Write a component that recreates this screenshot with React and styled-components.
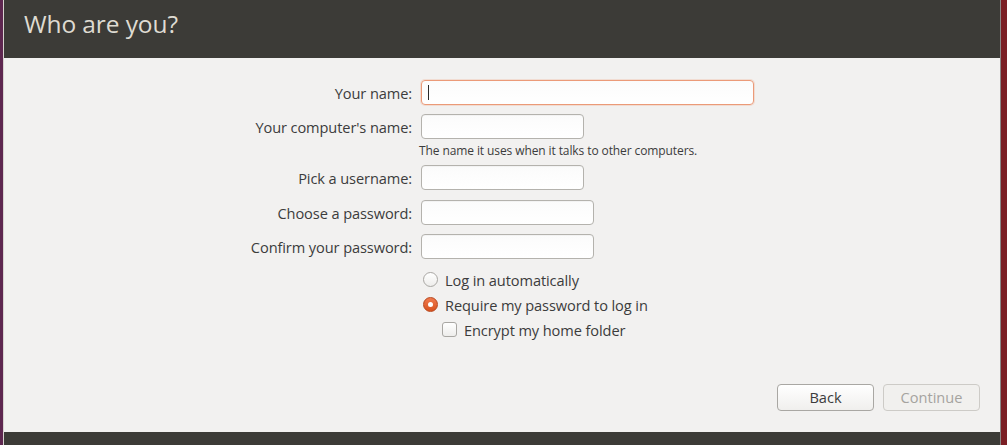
import React from "react";
import styled, { createGlobalStyle } from "styled-components";

const GlobalStyle = createGlobalStyle`
  html, body {
    margin: 0;
    padding: 0;
    width: 1007px;
    height: 445px;
    overflow: hidden;
    background: #5e2750;
  }
  * { box-sizing: border-box; }
`;

//Screen
const Screen = styled.div`
  display: flex;
  width: 1007px;
  height: 445px;
  font-family: "Open Sans", "Noto Sans", sans-serif;
`;

//Desktop edges
const Edge = styled.div`
  width: ${(p) => p.w}px;
  background: ${(p) => p.bg};
  border-${(p) => p.side}: 1px solid ${(p) => p.line};
`;

//Window
const Window = styled.div`
  flex: 1;
  display: flex;
  flex-direction: column;
  background: #f2f1f0;
`;

const Header = styled.div`
  height: 58px;
  background: #3c3b37;
  display: flex;
  align-items: center;
  padding-left: 20px;
  padding-bottom: 11px;
`;

const Title = styled.h1`
  margin: 0;
  font-weight: 400;
  font-size: 24.5px;
  color: #dfdbd2;
  letter-spacing: -0.1px;
`;

const Content = styled.div`
  flex: 1;
  display: flex;
  flex-direction: column;
  padding: 22px 20px 21px 0;
`;

const Form = styled.div`
  display: grid;
  grid-template-columns: 408px 1fr;
  column-gap: 9px;
  align-items: center;
`;

const Label = styled.label`
  justify-self: end;
  font-size: 14.6px;
  color: #3c3c3c;
  margin-top: ${(p) => p.mt || 0}px;
  letter-spacing: -0.1px;
`;

const Input = styled.div`
  height: 25px;
  width: ${(p) => p.w}px;
  margin-top: ${(p) => p.mt || 0}px;
  border-radius: 4px;
  border: 1px solid ${(p) => (p.focused ? "#eb9a78" : "#b4b2ad")};
  background: linear-gradient(#fbfbfb, #ffffff);
  box-shadow: ${(p) =>
    p.focused ? "0 0 0 1px rgba(240,160,120,0.25)" : "inset 0 1px 0 rgba(0,0,0,0.03)"};
  display: flex;
  align-items: center;
  padding-left: 6px;
`;

const Caret = styled.span`
  width: 1px;
  height: 15px;
  background: #2a2a2a;
`;

const Hint = styled.div`
  grid-column: 2;
  font-size: 12px;
  line-height: 16px;
  color: #3c3c3c;
  margin-top: 4px;
  margin-left: -2px;
  letter-spacing: -0.1px;
`;

const Options = styled.div`
  grid-column: 2;
  display: flex;
  flex-direction: column;
  margin-top: 8px;
`;

const Option = styled.div`
  display: flex;
  align-items: center;
  height: 25px;
  gap: 7px;
  padding-left: ${(p) => p.indent || 2}px;
  font-size: 14.6px;
  color: #3c3c3c;
  letter-spacing: -0.1px;
`;

const Radio = styled.span`
  width: 15px;
  height: 15px;
  border-radius: 50%;
  display: flex;
  align-items: center;
  justify-content: center;
  border: 1px solid ${(p) => (p.checked ? "#b8461c" : "#a9a7a3")};
  background: ${(p) =>
    p.checked
      ? "linear-gradient(#f07a4e, #d8531f)"
      : "linear-gradient(#ffffff, #eeedeb)"};
  &::after {
    content: "";
    display: ${(p) => (p.checked ? "block" : "none")};
    width: 5px;
    height: 5px;
    border-radius: 50%;
    background: #fff;
  }
`;

const Check = styled.span`
  width: 15px;
  height: 15px;
  border-radius: 3px;
  border: 1px solid #a9a7a3;
  background: linear-gradient(#ffffff, #eeedeb);
`;

const Actions = styled.div`
  margin-top: auto;
  display: flex;
  justify-content: flex-end;
  gap: 9px;
`;

const Button = styled.button`
  width: 97px;
  height: 27px;
  border-radius: 4px;
  font-family: inherit;
  font-size: 14.6px;
  border: 1px solid ${(p) => (p.disabled ? "#cdcbc7" : "#a9a7a3")};
  color: ${(p) => (p.disabled ? "#a5a39f" : "#3c3c3c")};
  background: ${(p) =>
    p.disabled ? "#f1f0ee" : "linear-gradient(#ffffff, #f0efed)"};
  padding: 0 0 2px;
`;

const Footer = styled.div`
  height: 13px;
  background: #3c3b37;
`;

export default function App() {
  return (
    <Screen>
      <GlobalStyle />
      <Edge w={4} bg="#5e2750" side="right" line="#d8d4d0" />
      <Window>
        <Header>
          <Title>Who are you?</Title>
        </Header>
        <Content>
          <Form>
            <Label>Your name:</Label>
            <Input w={333} focused>
              <Caret />
            </Input>
            <Label mt={9}>Your computer's name:</Label>
            <Input w={163} mt={9} />
            <Hint>The name it uses when it talks to other computers.</Hint>
            <Label mt={6}>Pick a username:</Label>
            <Input w={163} mt={6} />
            <Label mt={10}>Choose a password:</Label>
            <Input w={173} mt={10} />
            <Label mt={9}>Confirm your password:</Label>
            <Input w={173} mt={9} />
            <Options>
              <Option>
                <Radio />
                Log in automatically
              </Option>
              <Option>
                <Radio checked />
                Require my password to log in
              </Option>
              <Option indent={21}>
                <Check />
                Encrypt my home folder
              </Option>
            </Options>
          </Form>
          <Actions>
            <Button>Back</Button>
            <Button disabled>Continue</Button>
          </Actions>
        </Content>
        <Footer />
      </Window>
      <Edge w={7} bg="#7a1f24" side="left" line="#8a8886" />
    </Screen>
  );
}
